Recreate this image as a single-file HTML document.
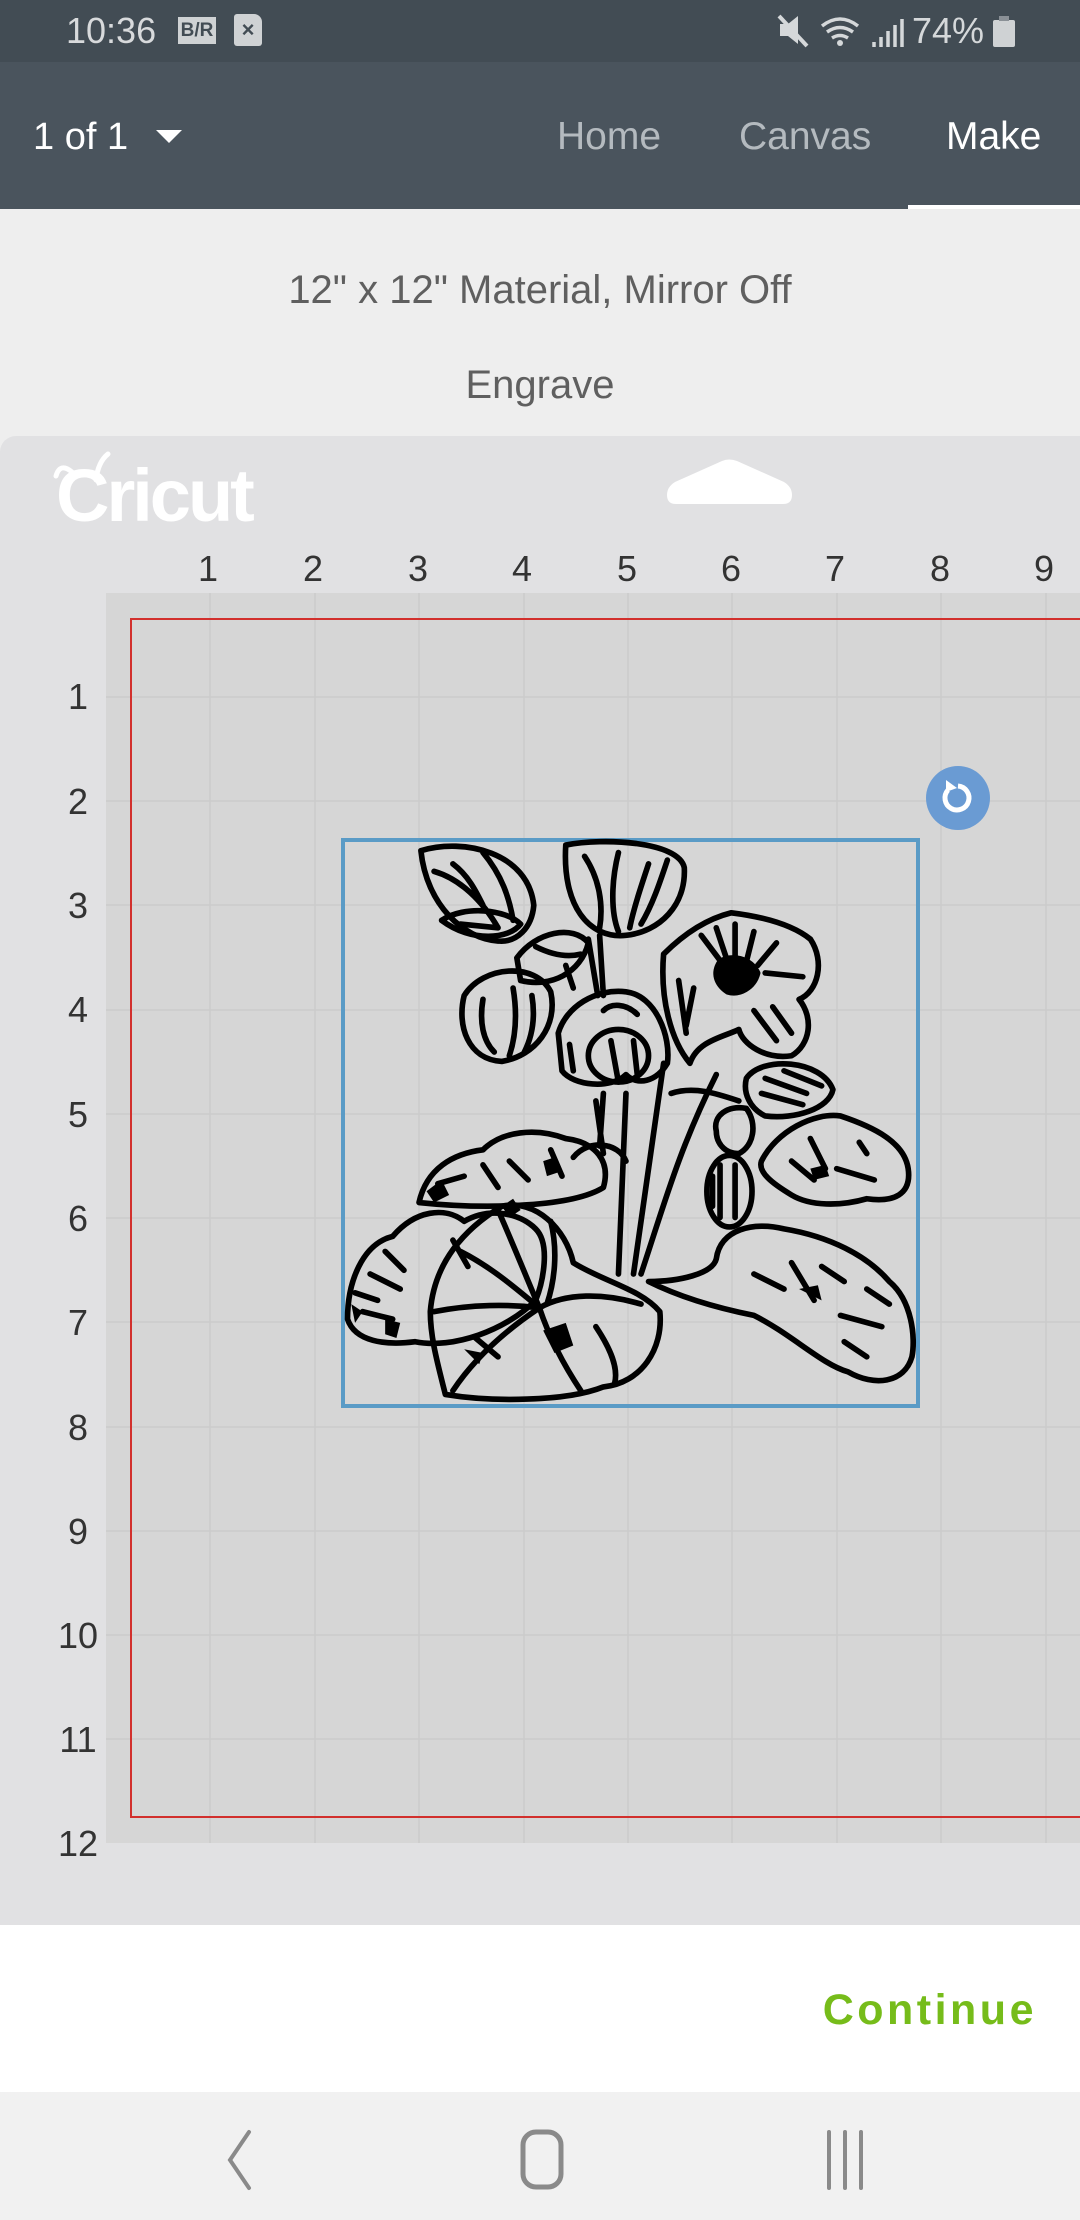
<!DOCTYPE html>
<html><head><meta charset="utf-8"><style>
*{margin:0;padding:0;box-sizing:border-box}
body{width:1080px;height:2220px;position:relative;overflow:hidden;background:#eeeeee;font-family:"Liberation Sans",sans-serif}
.a{position:absolute}
</style></head><body>
<div class="a" style="left:0;top:0;width:1080px;height:62px;background:#424c54"></div>
<div class="a" style="left:66px;top:10px;font-size:36px;color:#d8dadc;line-height:42px">10:36</div>
<div class="a" style="left:178px;top:17px;width:38px;height:27px;background:#cfd2d4;color:#424c54;font-size:19px;font-weight:bold;text-align:center;line-height:27px">B/R</div>
<div class="a" style="left:234px;top:14px;width:28px;height:32px;background:#cfd2d4;border-radius:3px 8px 3px 3px;color:#424c54;font-size:22px;font-weight:bold;text-align:center;line-height:32px">×</div>
<svg class="a" style="left:770px;top:10px" width="140" height="42" viewBox="0 0 140 42">
<path d="M10 14h8l10-8v28l-10-8h-8z" fill="#d5d8da"/><path d="M9 6l28 30" stroke="#d5d8da" stroke-width="4"/>
<path d="M52 16q18-14 36 0M57 22q13-9 26 0M62 28q8-5 16 0" stroke="#d5d8da" stroke-width="3.5" fill="none"/><circle cx="70" cy="33" r="3" fill="#d5d8da"/>
<path d="M104 37v-5M111 37v-10M118 37v-16M125 37v-22M132 37v-28" stroke="#d5d8da" stroke-width="3.5"/>
</svg>
<div class="a" style="left:912px;top:10px;font-size:36px;color:#d5d8da;line-height:42px">74%</div>
<div class="a" style="left:993px;top:20px;width:22px;height:27px;background:#cfd2d4;border-radius:2px"></div>
<div class="a" style="left:999px;top:16px;width:10px;height:5px;background:#8a9096"></div>

<div class="a" style="left:0;top:62px;width:1080px;height:147px;background:#4a545d"></div>
<div class="a" style="left:33px;top:114px;font-size:38px;color:#fff;line-height:46px">1 of 1</div>
<div class="a" style="left:156px;top:130px;width:0;height:0;border-left:13px solid transparent;border-right:13px solid transparent;border-top:13px solid #fff"></div>
<div class="a" style="left:557px;top:114px;font-size:39px;color:#b4babf;line-height:46px">Home</div>
<div class="a" style="left:739px;top:114px;font-size:39px;color:#b4babf;line-height:46px">Canvas</div>
<div class="a" style="left:946px;top:114px;font-size:39px;color:#fff;line-height:46px">Make</div>
<div class="a" style="left:908px;top:205px;width:172px;height:4px;background:#fff"></div>

<div class="a" style="left:0;top:267px;width:1080px;text-align:center;font-size:40px;color:#5f5f5f;line-height:46px">12" x 12" Material, Mirror Off</div>
<div class="a" style="left:0;top:362px;width:1080px;text-align:center;font-size:40px;color:#5f5f5f;line-height:46px">Engrave</div>

<div class="a" style="left:0;top:436px;width:1090px;height:1490px;background:#e1e1e3;border-radius:16px 0 0 0"></div>
<div class="a" style="left:56px;top:458px;font-size:74px;font-weight:bold;color:#fff;letter-spacing:-3px;line-height:76px">Cricut</div>
<svg class="a" style="left:50px;top:448px" width="80" height="40"><path d="M6 28q4-14 16-4M46 32q2-18 12-26" stroke="#fff" stroke-width="5" fill="none" stroke-linecap="round"/></svg>
<svg class="a" style="left:0;top:0" width="1080" height="2220">
<path d="M667 495Q667 487 675 482L722 461Q729 458 737 461L784 482Q792 487 792 495Q792 504 783 504L676 504Q667 504 667 495Z" fill="#fff"/>
<rect x="106" y="593" width="980" height="1250" fill="#d6d6d6"/>
<g stroke="#cbcbcb" stroke-width="1.5">
<path d="M210 593V1843M315 593V1843M419 593V1843M524 593V1843M628 593V1843M732 593V1843M837 593V1843M941 593V1843M1046 593V1843"/>
<path d="M106 697H1080M106 801H1080M106 905H1080M106 1010H1080M106 1114H1080M106 1218H1080M106 1322H1080M106 1427H1080M106 1531H1080M106 1635H1080M106 1739H1080"/>
</g>
<path d="M1086 619H131V1817H1086" fill="none" stroke="#d2302d" stroke-width="2"/>
<g font-family="Liberation Sans" font-size="36" fill="#333" text-anchor="middle">
<text x="208" y="581">1</text><text x="313" y="581">2</text><text x="418" y="581">3</text><text x="522" y="581">4</text><text x="627" y="581">5</text><text x="731" y="581">6</text><text x="835" y="581">7</text><text x="940" y="581">8</text><text x="1044" y="581">9</text>
<text x="78" y="709">1</text><text x="78" y="814">2</text><text x="78" y="918">3</text><text x="78" y="1022">4</text><text x="78" y="1127">5</text><text x="78" y="1231">6</text><text x="78" y="1335">7</text><text x="78" y="1440">8</text><text x="78" y="1544">9</text><text x="78" y="1648">10</text><text x="78" y="1752">11</text><text x="78" y="1856">12</text>
</g>
<rect x="343" y="840" width="575" height="566" fill="none" stroke="#5a9bc6" stroke-width="4"/>
<circle cx="958" cy="798" r="32" fill="#6a9bd3"/>
<path d="M948 790a12 12 0 1 0 10-4" fill="none" stroke="#fff" stroke-width="5"/><path d="M946 780l0 12 11-4z" fill="#fff"/>
</svg>
<svg class="a" style="left:340px;top:830px" width="590" height="590" viewBox="0 0 1568 1568">
<g fill="none" stroke="#000" stroke-width="15" stroke-linejoin="round" stroke-linecap="round">
<path d="M215 55C330 20 500 60 515 200C510 260 470 300 420 295C330 290 230 200 215 55Z"/>
<path d="M270 240C330 200 440 210 480 250C450 290 350 300 270 240Z"/>
<path d="M250 110C320 130 380 190 420 260M380 60C430 120 450 180 460 240M300 90C340 120 360 160 380 200M320 250L420 260"/>
<path d="M600 40C700 20 900 30 915 100C920 200 850 270 760 280C660 290 590 200 600 40Z"/>
<path d="M740 60C720 140 720 220 740 270M820 90C800 150 780 210 770 260M650 70C690 130 700 200 690 260M870 80C850 140 830 200 800 250"/>
<path d="M330 440C380 360 520 350 560 430C580 520 520 600 430 615C340 610 310 520 330 440Z"/>
<path d="M380 450C370 510 380 560 410 590M460 420C470 480 470 540 450 600M510 440C520 500 510 550 490 590"/>
<path d="M470 340C520 270 620 250 660 300C640 380 560 420 480 400Z"/>
<path d="M520 310C560 330 600 340 640 330M600 360L620 420"/>
<path d="M660 290L685 440M690 280L700 440"/>
<path d="M580 540C600 470 680 420 760 430C840 440 880 550 870 620C840 670 790 680 760 650C720 690 620 680 590 640Z"/>
<ellipse cx="740" cy="600" rx="80" ry="70"/>
<path d="M700 480C720 460 760 460 790 490M720 560L740 670M780 560L790 650M610 570L620 640"/>
<path d="M860 330C900 290 960 240 1040 220C1120 230 1200 250 1250 290C1290 350 1270 430 1220 450C1260 500 1250 570 1200 600C1130 610 1070 570 1060 530C1020 550 950 560 930 620C880 560 850 450 860 330Z"/>
<path d="M1010 350C1040 330 1090 340 1110 380C1100 420 1060 440 1030 430C1000 410 990 380 1010 350Z" fill="#000"/>
<path d="M960 280L1020 360M1100 270L1080 350M1150 470L1200 540M940 420L920 520M1130 380L1230 390M1000 260L1030 350M1050 250L1050 340M1160 300L1110 360M1100 480L1160 560M900 400L920 540"/>
<path d="M1080 660C1120 600 1280 610 1310 690C1300 740 1210 770 1130 760C1090 740 1070 700 1080 660Z"/>
<path d="M1130 660L1240 700M1120 700L1230 730M1180 640L1280 680"/>
<ellipse cx="1035" cy="960" rx="60" ry="95"/>
<path d="M1010 890V1030M1050 890V1030M990 920V1000"/>
<path d="M1000 800C990 760 1030 730 1080 740C1110 780 1100 840 1060 860C1020 860 1000 830 1000 800Z"/>
<path d="M740 1180L760 700M780 1180L860 620M800 1180C860 1000 900 850 1000 650M700 700L690 840M680 720L700 860"/>
<path d="M20 1300C20 1200 60 1100 140 1080C200 1010 280 1000 330 1040C400 1000 480 1020 520 1060C560 1100 540 1200 520 1250C440 1330 300 1380 200 1360C120 1370 40 1360 20 1300Z"/>
<path d="M80 1180L160 1220M60 1280L140 1300M300 1090L340 1160M120 1120L170 1170M40 1230L100 1250"/>
<path d="M210 990C230 900 300 860 380 850C430 800 520 790 600 820C680 830 720 880 700 950C620 1000 400 1010 210 990Z"/>
<path d="M260 940L330 920M450 880L500 930M560 850L590 920M380 890L420 950"/>
<path d="M240 1280C250 1150 330 1060 430 1000C520 980 600 1060 620 1150C700 1200 800 1220 850 1280C860 1380 800 1470 700 1480C600 1520 400 1520 280 1500C260 1420 240 1350 240 1280Z"/>
<path d="M250 1280C350 1260 450 1260 530 1270M420 1010C460 1100 500 1200 530 1270M530 1270C600 1230 700 1230 800 1260M530 1270C560 1360 600 1430 640 1490M530 1270C440 1330 360 1400 300 1490M320 1120C400 1160 470 1220 530 1270M560 1040C580 1120 570 1200 550 1260M680 1320C720 1380 740 1430 730 1470M360 1350L420 1400"/>
<path d="M820 1200C900 1200 990 1180 1000 1140C1010 1060 1100 1040 1180 1060C1300 1080 1400 1130 1460 1200C1520 1250 1530 1350 1520 1400C1500 1470 1420 1480 1350 1440C1280 1420 1200 1340 1100 1290C1000 1270 900 1240 820 1200Z"/>
<path d="M1200 1150L1260 1250M1330 1290L1440 1320M1340 1360L1400 1400M1100 1180L1180 1220M1280 1160L1340 1200M1400 1220L1460 1260"/>
<path d="M1120 880C1160 800 1260 750 1330 760C1420 790 1500 830 1510 900C1520 970 1470 990 1400 980C1330 1000 1250 1000 1200 970C1150 940 1110 910 1120 880Z"/>
<path d="M1250 820L1290 900M1320 900L1420 930M1380 830L1400 860M1200 880L1260 930"/>
<path d="M620 870C660 820 740 830 760 880M880 700C940 680 1000 700 1060 720"/>
</g>
<g fill="#000"><path d="M230 960l40-30 20 40-40 20z"/><path d="M540 1330l60-20 20 60-50 20z"/><path d="M330 1380l50 10-10 30z"/><path d="M1220 1220l50-10 10 40z"/><path d="M30 1260l30 20-20 30z"/><path d="M120 1300l40 10-10 40-30-10z"/><path d="M430 1000l30-20 20 30-30 20z"/><path d="M1250 900l40-10 10 30-40 10z"/><path d="M540 880l30-10 10 40-30 10z"/></g>
</svg>

<div class="a" style="left:0;top:1925px;width:1080px;height:167px;background:#fff"></div>
<div class="a" style="left:640px;top:1984px;width:397px;text-align:right;font-size:43px;font-weight:bold;color:#76bc1a;letter-spacing:3.5px;line-height:52px">Continue</div>
<div class="a" style="left:0;top:2092px;width:1080px;height:128px;background:#f1f1f1"></div>
<svg class="a" style="left:0;top:2092px" width="1080" height="128">
<path d="M249 40L230 68L249 96" fill="none" stroke="#8a8a8a" stroke-width="4" stroke-linecap="round"/>
<rect x="523" y="40" width="38" height="55" rx="13" fill="none" stroke="#8a8a8a" stroke-width="5"/>
<path d="M829 40V96M845 40V96M861 40V96" stroke="#8a8a8a" stroke-width="4" stroke-linecap="round"/>
</svg>
</body></html>
